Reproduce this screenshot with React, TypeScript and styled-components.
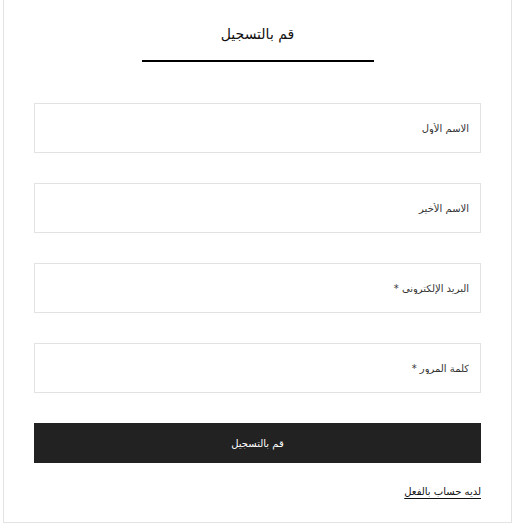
import styled, { createGlobalStyle } from 'styled-components'

const GlobalStyle = createGlobalStyle`
  html, body {
    margin: 0;
    padding: 0;
    background: #ffffff;
  }
  body {
    font-family: Tahoma, "DejaVu Sans", sans-serif;
  }
`

const fields = [
  { key: 'first', label: 'الاسم الأول', type: 'text' },
  { key: 'last', label: 'الاسم الأخير', type: 'text' },
  { key: 'email', label: 'البريد الإلكتروني *', type: 'email' },
  { key: 'password', label: 'كلمة المرور *', type: 'password' }
]

const App = () => {
  return (
    <>
      <GlobalStyle />
      <Panel dir="rtl">
        <Header>
          <Title>قم بالتسجيل</Title>
          <Rule />
        </Header>
        <Form onSubmit={(e) => e.preventDefault()}>
          {fields.map((f) => (
            <TextField key={f.key} type={f.type} placeholder={f.label} />
          ))}
          <Submit type="submit">قم بالتسجيل</Submit>
        </Form>
        <Footer>
          <LoginLink href="#">لديه حساب بالفعل</LoginLink>
        </Footer>
      </Panel>
    </>
  )
}

const Panel = styled.div`
  box-sizing: border-box;
  width: 509px;
  height: 523px;
  margin-left: 3px;
  border: 1px solid #e3e3e3;
  border-top: none;
  padding: 0 30px;
  display: flex;
  flex-direction: column;
`

const Header = styled.div`
  display: flex;
  flex-direction: column;
  align-items: center;
  padding-top: 24px;
`

const Title = styled.h2`
  margin: 0;
  font-size: 14px;
  font-weight: normal;
  line-height: 20px;
  color: #111111;
`

const Rule = styled.div`
  width: 232px;
  height: 2px;
  background: #000000;
  margin-top: 16px;
`

const Form = styled.form`
  display: flex;
  flex-direction: column;
  gap: 30px;
  margin-top: 41px;
`

const TextField = styled.input`
  box-sizing: border-box;
  height: 50px;
  width: 100%;
  border: 1px solid #e2e2e2;
  background: #ffffff;
  padding: 0 11px;
  font-family: Tahoma, "DejaVu Sans", sans-serif;
  font-size: 10px;
  color: #333333;
  outline: none;

  &::placeholder {
    color: #333333;
    opacity: 1;
  }
`

const Submit = styled.button`
  height: 40px;
  width: 100%;
  border: none;
  background: #222222;
  color: #ffffff;
  font-family: Tahoma, "DejaVu Sans", sans-serif;
  font-size: 10px;
  cursor: pointer;
`

const Footer = styled.div`
  display: flex;
  justify-content: flex-start;
  margin-top: 23px;
`

const LoginLink = styled.a`
  font-size: 10px;
  color: #111111;
  text-decoration: underline;
  text-underline-offset: 3px;
`

export default App
